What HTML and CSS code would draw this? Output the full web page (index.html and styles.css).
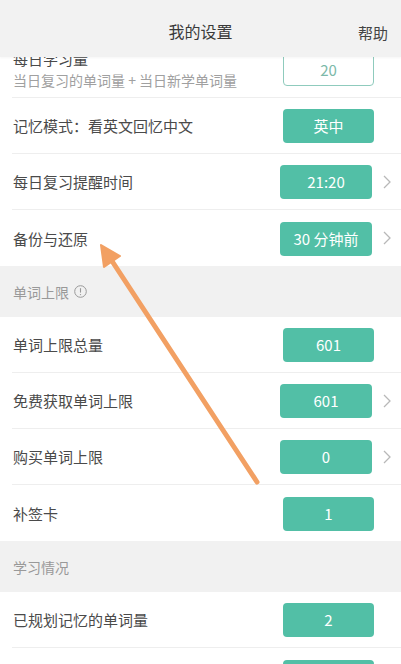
FILE: index.html
```html
<!DOCTYPE html>
<html lang="zh-CN">
<head>
    <meta charset="UTF-8">
    <meta name="viewport" content="width=device-width, initial-scale=1.0">
    <title>我的设置</title>
    <link rel="stylesheet" href="styles.css">
</head>
<body>

<div id="page">
    <div class="header">
        <span class="header-title">我的设置</span>
        <span class="header-help">帮助</span>
    </div>

    <div class="list">
        <div class="group">
            <div class="row row-tall">
                <div class="label">
                    <div>每日学习量</div>
                    <div class="sub">当日复习的单词量 + 当日新学单词量</div>
                </div>
                <div class="value outline">20</div>
            </div>
            <div class="row">
                <div class="label">记忆模式：看英文回忆中文</div>
                <div class="value">英中</div>
            </div>
            <div class="row has-arrow">
                <div class="label">每日复习提醒时间</div>
                <div class="value">21:20</div>
                <span class="chevron"><svg width="8" height="14" viewBox="0 0 8 14"><path d="M1 1 L7 7 L1 13" fill="none" stroke="#b8b8b8" stroke-width="1.3"/></svg></span>
            </div>
            <div class="row has-arrow">
                <div class="label">备份与还原</div>
                <div class="value">30 分钟前</div>
                <span class="chevron"><svg width="8" height="14" viewBox="0 0 8 14"><path d="M1 1 L7 7 L1 13" fill="none" stroke="#b8b8b8" stroke-width="1.3"/></svg></span>
            </div>
        </div>

        <div class="section-title">单词上限
            <svg class="info" width="13" height="13" viewBox="0 0 13 13"><circle cx="6.5" cy="6.5" r="5.8" fill="none" stroke="#999" stroke-width="1"/><path d="M6.5 3.2 V7.6" stroke="#999" stroke-width="1.1"/><circle cx="6.5" cy="9.6" r="0.7" fill="#999"/></svg>
        </div>

        <div class="group">
            <div class="row">
                <div class="label">单词上限总量</div>
                <div class="value">601</div>
            </div>
            <div class="row has-arrow">
                <div class="label">免费获取单词上限</div>
                <div class="value">601</div>
                <span class="chevron"><svg width="8" height="14" viewBox="0 0 8 14"><path d="M1 1 L7 7 L1 13" fill="none" stroke="#b8b8b8" stroke-width="1.3"/></svg></span>
            </div>
            <div class="row has-arrow">
                <div class="label">购买单词上限</div>
                <div class="value">0</div>
                <span class="chevron"><svg width="8" height="14" viewBox="0 0 8 14"><path d="M1 1 L7 7 L1 13" fill="none" stroke="#b8b8b8" stroke-width="1.3"/></svg></span>
            </div>
            <div class="row">
                <div class="label">补签卡</div>
                <div class="value">1</div>
            </div>
        </div>

        <div class="section-title">学习情况</div>

        <div class="group">
            <div class="row">
                <div class="label">已规划记忆的单词量</div>
                <div class="value">2</div>
            </div>
            <!-- next row is only just scrolled into view -->
            <div class="row">
                <div class="label"></div>
                <div class="value"></div>
            </div>
        </div>
    </div>

    <!-- annotation arrow drawn over the screenshot -->
    <svg class="pointer" width="401" height="664" viewBox="0 0 401 664">
        <line x1="257" y1="482" x2="110" y2="258" stroke="#f2a063" stroke-width="5" stroke-linecap="round"/>
        <polygon points="101,245 120,256 104,267" fill="#f2a063" stroke="#f2a063" stroke-width="2" stroke-linejoin="round"/>
    </svg>
</div>

</body>
</html>
```

FILE: styles.css
```css
body {
    margin: 0;
    padding: 0;
    font-family: "Noto Sans CJK SC", "Noto Sans", sans-serif;
    background-color: #fff;
}

#page {
    position: relative;
    width: 401px;
    height: 664px;
    overflow: hidden;
}

.header {
    position: relative;
    z-index: 2;
    height: 57px;
    background-color: #f2f2f2;
    display: flex;
    align-items: center;
    justify-content: center;
    box-shadow: 0 1px 2px rgba(0, 0, 0, 0.04);
}

.header-title {
    font-size: 16px;
    color: #3a3a3a;
    padding-top: 4px;
}

.header-help {
    position: absolute;
    right: 13px;
    top: 22px;
    font-size: 15px;
    color: #444;
}

.list {
    margin-top: -17px;
}

.row {
    height: 55px;
    margin-left: 12px;
    border-bottom: 1px solid #eeeeee;
    display: flex;
    align-items: center;
    padding-right: 27px;
}

.row-tall {
    height: 57px;
}

.group .row:last-child {
    border-bottom: none;
    height: 56px;
}

.row.has-arrow {
    padding-right: 10px;
}

.label {
    flex: 1;
    padding-left: 1px;
    font-size: 15px;
    color: #4a4a4a;
}

.sub {
    font-size: 14px;
    color: #a0a0a0;
    margin-top: 1px;
}

.value {
    width: 91px;
    height: 34px;
    line-height: 34px;
    border-radius: 4px;
    background-color: #52bfa6;
    color: #fff;
    text-align: center;
    font-size: 15px;
    margin-top: 1px;
}

.value.outline {
    background-color: #fff;
    color: #7cb9a9;
    border: 1px solid #8fcbbd;
    box-sizing: border-box;
}

.has-arrow .value {
    width: 92px;
}

.chevron {
    width: 8px;
    margin-left: 11px;
    display: flex;
    align-items: center;
}

.section-title {
    height: 51px;
    background-color: #f1f1f1;
    display: flex;
    align-items: center;
    padding-left: 13px;
    font-size: 14px;
    color: #999;
}

.info {
    margin-left: 5px;
}

.pointer {
    position: absolute;
    left: 0;
    top: 0;
    z-index: 3;
}
```
